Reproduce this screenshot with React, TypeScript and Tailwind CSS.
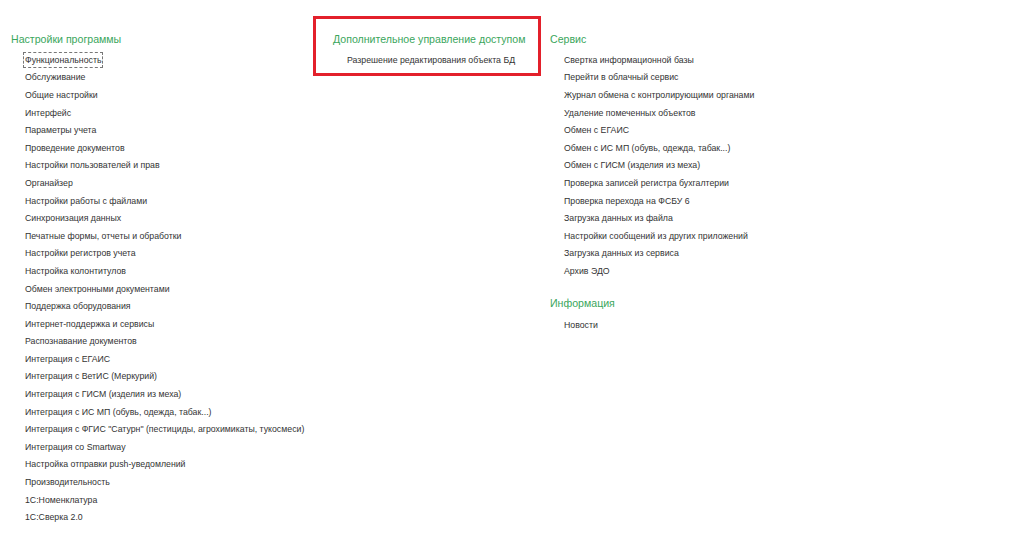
import React from "react";

const col1 = [
  "Функциональность",
  "Обслуживание",
  "Общие настройки",
  "Интерфейс",
  "Параметры учета",
  "Проведение документов",
  "Настройки пользователей и прав",
  "Органайзер",
  "Настройки работы с файлами",
  "Синхронизация данных",
  "Печатные формы, отчеты и обработки",
  "Настройки регистров учета",
  "Настройка колонтитулов",
  "Обмен электронными документами",
  "Поддержка оборудования",
  "Интернет-поддержка и сервисы",
  "Распознавание документов",
  "Интеграция с ЕГАИС",
  "Интеграция с ВетИС (Меркурий)",
  "Интеграция с ГИСМ (изделия из меха)",
  "Интеграция с ИС МП (обувь, одежда, табак...)",
  "Интеграция с ФГИС \"Сатурн\" (пестициды, агрохимикаты, тукосмеси)",
  "Интеграция со Smartway",
  "Настройка отправки push-уведомлений",
  "Производительность",
  "1С:Номенклатура",
  "1С:Сверка 2.0",
];

const col3 = [
  "Свертка информационной базы",
  "Перейти в облачный сервис",
  "Журнал обмена с контролирующими органами",
  "Удаление помеченных объектов",
  "Обмен с ЕГАИС",
  "Обмен с ИС МП (обувь, одежда, табак...)",
  "Обмен с ГИСМ (изделия из меха)",
  "Проверка записей регистра бухгалтерии",
  "Проверка перехода на ФСБУ 6",
  "Загрузка данных из файла",
  "Настройки сообщений из других приложений",
  "Загрузка данных из сервиса",
  "Архив ЭДО",
];

function Heading({ children }: { children: React.ReactNode }) {
  return (
    <div className="h-[16px] leading-[16px] text-[10.6px] text-[#3aa65c] whitespace-nowrap">
      {children}
    </div>
  );
}

function Item({ children, focused }: { children: React.ReactNode; focused?: boolean }) {
  return (
    <div className="h-[17.6px] flex items-center pl-[14px] whitespace-nowrap">
      <span
        className={
          focused
            ? "outline outline-1 outline-dashed outline-[#777] outline-offset-[1px] text-[8.75px] leading-[12px] text-[#333]"
            : "text-[8.75px] leading-[12px] text-[#333]"
        }
      >
        {children}
      </span>
    </div>
  );
}

export default function App() {
  return (
    <div
      className="w-[1024px] h-[539px] bg-white overflow-hidden flex"
      style={{ fontFamily: '"Liberation Sans", Arial, sans-serif' }}
    >
      <div className="w-[313px] pl-[11px] pt-[31px] flex flex-col">
        <Heading>Настройки программы</Heading>
        <div className="h-[4px]" />
        {col1.map((t, i) => (
          <Item key={t} focused={i === 0}>
            {t}
          </Item>
        ))}
      </div>
      <div className="self-start mt-[16px] w-[228px] border-[3px] border-[#e3202b] pl-[17px] pt-[12px] pb-[4px] flex flex-col">
        <Heading>Дополнительное управление доступом</Heading>
        <div className="h-[4px]" />
        <Item>Разрешение редактирования объекта БД</Item>
      </div>
      <div className="ml-[9px] pt-[31px] flex flex-col">
        <Heading>Сервис</Heading>
        <div className="h-[4px]" />
        {col3.map((t) => (
          <Item key={t}>{t}</Item>
        ))}
        <div className="h-[15px]" />
        <Heading>Информация</Heading>
        <div className="h-[5px]" />
        <Item>Новости</Item>
      </div>
    </div>
  );
}
